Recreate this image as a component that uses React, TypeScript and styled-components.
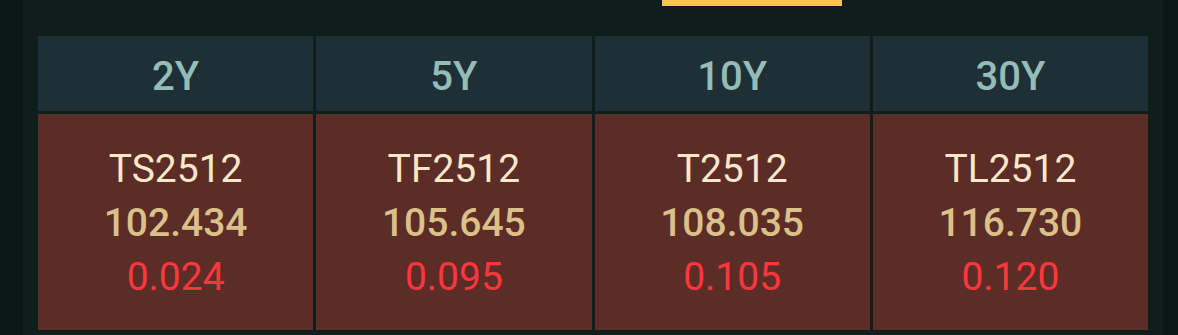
import React from "react";
import styled, { createGlobalStyle } from "styled-components";

const Global = createGlobalStyle`
  html, body { margin: 0; padding: 0; background: #0a1818; }
  body { font-family: Roboto, "Noto Sans", sans-serif; }
`;

const Page = styled.div`
  width: 1178px;
  height: 335px;
  background: #0a1818;
  padding: 0 15px 0 23px;
  box-sizing: border-box;
  display: flex;
`;

const Panel = styled.div`
  flex: 1;
  background: #0f1d1d;
  padding: 0 15px 5px 15px;
  display: flex;
  flex-direction: column;
`;

const TabStrip = styled.div`
  height: 36px;
  display: flex;
  align-items: flex-start;
`;

const Indicator = styled.div`
  margin-left: 624px;
  width: 180px;
  height: 6px;
  background: #fbc257;
`;

const Grid = styled.div`
  display: grid;
  grid-template-columns: repeat(4, 1fr);
  grid-template-rows: 75px 216px;
  gap: 3px;
`;

const HeadCell = styled.div`
  background: #1e3036;
  color: #94bdb8;
  font-size: 40px;
  font-weight: 500;
  display: flex;
  align-items: center;
  justify-content: center;
  padding-top: 6px;
  box-sizing: border-box;
`;

const BodyCell = styled.div`
  background: #5c2c27;
  display: flex;
  flex-direction: column;
  align-items: center;
  justify-content: center;
  font-size: 39px;
  line-height: 54px;
  padding-top: 1px;
  box-sizing: border-box;
`;

const Name = styled.div`
  color: #fbe8cb;
`;

const Price = styled.div`
  color: #dcc08a;
  font-weight: 500;
`;

const Change = styled.div`
  color: #ff363c;
`;

const data = [
  { tenor: "2Y", code: "TS2512", price: "102.434", chg: "0.024" },
  { tenor: "5Y", code: "TF2512", price: "105.645", chg: "0.095" },
  { tenor: "10Y", code: "T2512", price: "108.035", chg: "0.105" },
  { tenor: "30Y", code: "TL2512", price: "116.730", chg: "0.120" },
];

export default function App() {
  return (
    <>
      <Global />
      <Page>
        <Panel>
          <TabStrip>
            <Indicator />
          </TabStrip>
          <Grid>
            {data.map((d) => (
              <HeadCell key={"h" + d.tenor}>{d.tenor}</HeadCell>
            ))}
            {data.map((d) => (
              <BodyCell key={"b" + d.tenor}>
                <Name>{d.code}</Name>
                <Price>{d.price}</Price>
                <Change>{d.chg}</Change>
              </BodyCell>
            ))}
          </Grid>
        </Panel>
      </Page>
    </>
  );
}
